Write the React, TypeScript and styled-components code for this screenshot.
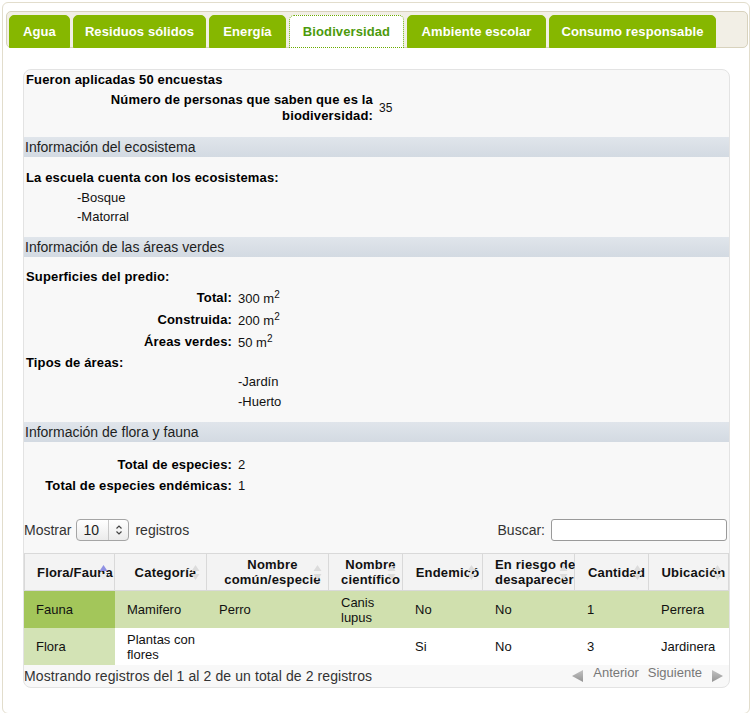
import styled, { createGlobalStyle } from 'styled-components';

const GlobalStyle = createGlobalStyle`
  body {
    margin: 0;
    background: #fff;
    font-family: "Liberation Sans", Arial, Helvetica, sans-serif;
    color: #222;
  }
`;

const Page = styled.div`
  padding: 2px 1px 0 2px;
`;

const Widget = styled.div`
  border: 1px solid #e2ddcc;
  border-radius: 6px;
  background: #fff;
  padding: 8px 1px 25px 3px;
`;

const TabBar = styled.ul`
  display: flex;
  align-items: flex-end;
  gap: 3px;
  height: 35px;
  margin: 0;
  padding: 0 0 0 2px;
  list-style: none;
  background: #f2efe6;
  border: 1px solid #d8d2bd;
  border-radius: 5px;
`;

const Tab = styled.li<{ $active?: boolean; $w: number }>`
  box-sizing: border-box;
  width: ${(p) => p.$w}px;
  height: 33px;
  margin-bottom: -1px;
  display: flex;
  align-items: center;
  justify-content: center;
  border-radius: 5px 5px 0 0;
  font-size: 13px;
  font-weight: bold;
  letter-spacing: 0.1px;
  white-space: nowrap;
  background: ${(p) => (p.$active ? '#fff' : '#86b700')};
  color: ${(p) => (p.$active ? '#4c9a0c' : '#fff')};
  border: 1px ${(p) => (p.$active ? 'dotted #6aac00' : 'solid #86b700')};
`;

const Panel = styled.div`
  margin: 21px 18px 0 17px;
  background: #f8f8f8;
  border: 1px solid #e3e3e3;
  border-radius: 8px;
  overflow: hidden;
`;

const Intro = styled.div`
  padding: 0 0 13px 2px;
`;

const Strong = styled.div<{ $lh?: number }>`
  font-size: 13px;
  font-weight: bold;
  letter-spacing: 0.15px;
  color: #000;
  line-height: ${(p) => p.$lh ?? 20}px;
`;

const KVRow = styled.div<{ $label: number; $h: number; $top?: number }>`
  display: grid;
  grid-template-columns: ${(p) => p.$label}px auto;
  column-gap: 6px;
  align-items: center;
  min-height: ${(p) => p.$h}px;
  margin-top: ${(p) => p.$top ?? 0}px;
`;

const Key = styled.div`
  text-align: right;
  font-size: 13px;
  font-weight: bold;
  letter-spacing: 0.15px;
  line-height: 16px;
  color: #000;
`;

const Val = styled.div<{ $size?: number }>`
  font-size: ${(p) => p.$size ?? 13}px;
  color: #111;
`;

const SectionTitle = styled.div`
  height: 20px;
  line-height: 20px;
  padding-left: 1px;
  font-size: 14px;
  color: #1e1e1e;
  background: linear-gradient(#e0e5eb, #d3dae2);
`;

const SectionBody = styled.div<{ $top: number; $bottom: number }>`
  padding: ${(p) => p.$top}px 0 ${(p) => p.$bottom}px 2px;
`;

const Item = styled.div<{ $indent: number; $lh: number }>`
  padding-left: ${(p) => p.$indent}px;
  font-size: 13px;
  line-height: ${(p) => p.$lh}px;
  color: #111;
`;

const Sup = styled.sup`
  font-size: 10px;
  line-height: 0;
`;

const Controls = styled.div`
  display: flex;
  justify-content: space-between;
  align-items: center;
  height: 22px;
  margin-top: 23px;
  padding-right: 2px;
  font-size: 14px;
  color: #333;
`;

const Group = styled.div`
  display: flex;
  align-items: center;
`;

const SelectBox = styled.div`
  box-sizing: border-box;
  display: inline-flex;
  align-items: center;
  width: 53px;
  height: 22px;
  margin: 0 6px 0 5px;
  border: 1px solid #a5a5a5;
  border-radius: 4px;
  background: linear-gradient(#fff, #ebebeb);
  font-size: 14px;
  color: #222;
`;

const SelectValue = styled.span`
  flex: 1;
  padding-left: 6px;
`;

const SelectArrow = styled.span`
  display: flex;
  align-items: center;
  justify-content: center;
  width: 19px;
  height: 100%;
  border-left: 1px solid #c8c8c8;
`;

const SearchInput = styled.input`
  box-sizing: border-box;
  width: 176px;
  height: 22px;
  margin-left: 6px;
  border: 1px solid #9a9a9a;
  border-radius: 3px;
  background: #fff;
  font: inherit;
`;

const Table = styled.table`
  width: 100%;
  margin-top: 12px;
  border-collapse: separate;
  border-spacing: 0;
  table-layout: fixed;
  font-size: 13px;
`;

const Th = styled.th`
  position: relative;
  height: 36px;
  padding: 0 2px 0 12px;
  background: #f3f3f3;
  border-top: 1px solid #d9d9d9;
  border-bottom: 1px solid #d9d9d9;
  border-right: 1px solid #d9d9d9;
  font-size: 13px;
  font-weight: bold;
  letter-spacing: 0.2px;
  line-height: 15px;
  color: #111;
  text-align: center;
  white-space: nowrap;

  &:first-child {
    border-left: 1px solid #d9d9d9;
  }
`;

const SortMark = styled.svg`
  position: absolute;
  right: 6px;
  top: 50%;
  margin-top: -9px;
`;

const Td = styled.td<{ $bg: string }>`
  height: 37px;
  padding: 0 4px 0 12px;
  line-height: 15px;
  vertical-align: middle;
  background: ${(p) => p.$bg};
  color: #111;
`;

const TableFooter = styled.div`
  display: flex;
  justify-content: space-between;
  align-items: center;
  height: 22px;
  font-size: 14px;
  letter-spacing: 0.1px;
  color: #333;
`;

const Pager = styled.div`
  display: flex;
  align-items: center;
  gap: 9px;
  padding-right: 5px;
  font-size: 13px;
  letter-spacing: 0;
  color: #777;
`;

const PagerLabel = styled.span`
  padding-bottom: 7px;
`;

const sortColors = { both: ['#dcdcdc', '#dcdcdc'], asc: ['#8f91e3', '#ececec'] };

function SortIcon({ dir }: { dir: 'both' | 'asc' }) {
  const [up, down] = sortColors[dir];
  return (
    <SortMark width="9" height="19" viewBox="0 0 9 19">
      <polygon points="4.5,2 0.5,8 8.5,8" fill={up} />
      <polygon points="0.5,11 8.5,11 4.5,17" fill={down} />
    </SortMark>
  );
}

function PageArrow({ dir }: { dir: 'left' | 'right' }) {
  return (
    <svg width="13" height="14" viewBox="0 0 13 14">
      <defs>
        <linearGradient id={`pg-${dir}`} x1="0" y1="0" x2="0" y2="1">
          <stop offset="0" stopColor="#c2c2c2" />
          <stop offset="1" stopColor="#949494" />
        </linearGradient>
      </defs>
      {dir === 'left' ? (
        <polygon points="12,1 12,13 1,7" fill={`url(#pg-${dir})`} />
      ) : (
        <polygon points="1,1 1,13 12,7" fill={`url(#pg-${dir})`} />
      )}
    </svg>
  );
}

const tabs = [
  { label: 'Agua', width: 61 },
  { label: 'Residuos sólidos', width: 133 },
  { label: 'Energía', width: 77 },
  { label: 'Biodiversidad', width: 115 },
  { label: 'Ambiente escolar', width: 139 },
  { label: 'Consumo responsable', width: 167 },
];

const columns: { label: React.ReactNode; width: number; dir: 'both' | 'asc' }[] = [
  { label: 'Flora/Fauna', width: 91, dir: 'asc' },
  { label: 'Categoría', width: 92, dir: 'both' },
  { label: <>Nombre<br />común/especie</>, width: 122, dir: 'both' },
  { label: <>Nombre<br />científico</>, width: 74, dir: 'both' },
  { label: 'Endemicó', width: 80, dir: 'both' },
  { label: <>En riesgo de<br />desaparecer</>, width: 92, dir: 'both' },
  { label: 'Cantidad', width: 74, dir: 'both' },
  { label: 'Ubicación', width: 80, dir: 'both' },
];

const rows = [
  ['Fauna', 'Mamifero', 'Perro', 'Canis lupus', 'No', 'No', '1', 'Perrera'],
  ['Flora', 'Plantas con flores', '', '', 'Si', 'No', '3', 'Jardinera'],
];

const rowColors = [
  { sorted: '#a3c65a', rest: '#d0e0ae' },
  { sorted: '#d3e3b5', rest: '#ffffff' },
];

export default function App() {
  return (
    <>
      <GlobalStyle />
      <Page>
        <Widget>
          <TabBar>
            {tabs.map((t) => (
              <Tab key={t.label} $w={t.width} $active={t.label === 'Biodiversidad'}>
                {t.label}
              </Tab>
            ))}
          </TabBar>

          <Panel>
            <Intro>
              <Strong $lh={19}>Fueron aplicadas 50 encuestas</Strong>
              <KVRow $label={347} $h={32} $top={3}>
                <Key>
                  Número de personas que saben que es la
                  <br />
                  biodiversidad:
                </Key>
                <Val $size={12}>35</Val>
              </KVRow>
            </Intro>

            <SectionTitle>Información del ecosistema</SectionTitle>
            <SectionBody $top={11} $bottom={11}>
              <Strong>La escuela cuenta con los ecosistemas:</Strong>
              <Item $indent={51} $lh={19}>-Bosque</Item>
              <Item $indent={51} $lh={19}>-Matorral</Item>
            </SectionBody>

            <SectionTitle>Información de las áreas verdes</SectionTitle>
            <SectionBody $top={10} $bottom={10}>
              <Strong>Superficies del predio:</Strong>
              <KVRow $label={206} $h={22}>
                <Key>Total:</Key>
                <Val>300 m<Sup>2</Sup></Val>
              </KVRow>
              <KVRow $label={206} $h={22}>
                <Key>Construida:</Key>
                <Val>200 m<Sup>2</Sup></Val>
              </KVRow>
              <KVRow $label={206} $h={22}>
                <Key>Áreas verdes:</Key>
                <Val>50 m<Sup>2</Sup></Val>
              </KVRow>
              <Strong $lh={19}>Tipos de áreas:</Strong>
              <Item $indent={212} $lh={20}>-Jardín</Item>
              <Item $indent={212} $lh={20}>-Huerto</Item>
            </SectionBody>

            <SectionTitle>Información de flora y fauna</SectionTitle>
            <SectionBody $top={12} $bottom={0}>
              <KVRow $label={206} $h={21}>
                <Key>Total de especies:</Key>
                <Val>2</Val>
              </KVRow>
              <KVRow $label={206} $h={21}>
                <Key>Total de especies endémicas:</Key>
                <Val>1</Val>
              </KVRow>
            </SectionBody>

            <Controls>
              <Group>
                Mostrar
                <SelectBox>
                  <SelectValue>10</SelectValue>
                  <SelectArrow>
                    <svg width="8" height="12" viewBox="0 0 8 12">
                      <polyline points="1.5,4.5 4,2 6.5,4.5" fill="none" stroke="#444" strokeWidth="1.2" />
                      <polyline points="1.5,7.5 4,10 6.5,7.5" fill="none" stroke="#444" strokeWidth="1.2" />
                    </svg>
                  </SelectArrow>
                </SelectBox>
                registros
              </Group>
              <Group>
                Buscar:
                <SearchInput type="text" />
              </Group>
            </Controls>

            <Table>
              <colgroup>
                {columns.map((c, i) => (
                  <col key={i} style={{ width: c.width }} />
                ))}
              </colgroup>
              <thead>
                <tr>
                  {columns.map((c, i) => (
                    <Th key={i}>
                      {c.label}
                      <SortIcon dir={c.dir} />
                    </Th>
                  ))}
                </tr>
              </thead>
              <tbody>
                {rows.map((r, ri) => (
                  <tr key={ri}>
                    {r.map((cell, ci) => (
                      <Td key={ci} $bg={ci === 0 ? rowColors[ri].sorted : rowColors[ri].rest}>
                        {cell}
                      </Td>
                    ))}
                  </tr>
                ))}
              </tbody>
            </Table>

            <TableFooter>
              <span>Mostrando registros del 1 al 2 de un total de 2 registros</span>
              <Pager>
                <PageArrow dir="left" />
                <PagerLabel>Anterior</PagerLabel>
                <PagerLabel>Siguiente</PagerLabel>
                <PageArrow dir="right" />
              </Pager>
            </TableFooter>
          </Panel>
        </Widget>
      </Page>
    </>
  );
}
